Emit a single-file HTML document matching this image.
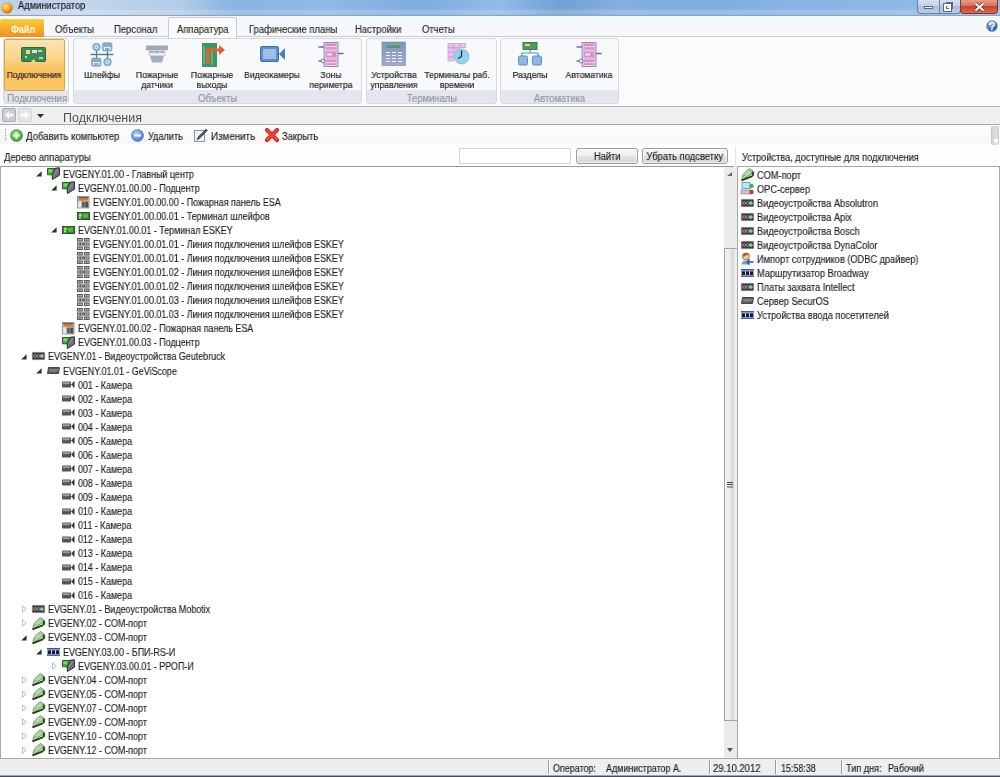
<!DOCTYPE html><html><head><meta charset="utf-8"><style>
*{margin:0;padding:0;box-sizing:border-box}
html,body{width:1000px;height:777px;overflow:hidden;background:#f0f0f0;font-family:"Liberation Sans",sans-serif;font-size:10px;color:#1e1e1e}
.a{position:absolute}
.t{position:absolute;white-space:nowrap;letter-spacing:0;line-height:12px;transform-origin:0 0;will-change:transform;-webkit-text-stroke:0.15px currentColor}
svg{position:absolute;overflow:visible}
#title{left:0;top:0;width:1000px;height:16px;background:linear-gradient(rgba(255,255,255,0) 0%,rgba(255,255,255,0) 55%,rgba(255,255,255,0.22) 78%,rgba(255,255,255,0.12) 100%),linear-gradient(90deg,#bccfe6 0px,#c3d6ec 80px,#b4cbe8 180px,#8ab4e2 230px,#8fb9e6 330px,#7eacdf 420px,#90bce8 500px,#729fd6 560px,#84b0e2 620px,#7eade2 700px,#86b3e4 780px,#8cb8e6 870px,#90bae6 1000px);border-bottom:1px solid #8da3bd}
#tabs{left:0;top:16px;width:1000px;height:21px;background:#f6f7f9;border-bottom:1px solid #c9ced6}
#ribbon{left:0;top:37px;width:1000px;height:70px;background:#fbfbfc;border-bottom:1px solid #b4b9c0}
.grp{position:absolute;top:38px;height:66px;border:1px solid #d6dae0;border-radius:3px;background:#f8f9fa}
.grp .lb{position:absolute;left:0;right:0;bottom:0;height:13px;background:#e3e7ed;color:#8f939a;text-align:center;font-size:10.5px;line-height:16.5px}.grp .lb span{display:inline-block;transform:scaleX(0.9);will-change:transform;-webkit-text-stroke:0.15px currentColor}
.ri{position:absolute;text-align:center;font-size:9.2px;line-height:10px;color:#262626;white-space:nowrap;transform:scaleX(0.94);-webkit-text-stroke:0.2px #262626;will-change:transform}
#nav{left:0;top:107px;width:1000px;height:18px;background:#efefef;border-bottom:1px solid #aaaaaa}
#tool{left:0;top:125px;width:1000px;height:19px;background:linear-gradient(#fdfdfd,#f6f6f8)}
#lbl{left:0;top:144px;width:1000px;height:22px;background:#fefefe}
#tree{left:0;top:166px;width:734px;height:593px;background:#fff;border-top:1px solid #9a9a9a;border-left:1px solid #a9a9a9}
#right{left:737px;top:166px;width:263px;height:593px;background:#fff;border:1px solid #a7a7a7}
#status{left:0;top:758px;width:1000px;height:18px;background:#efeeee;border-top:1px solid #a9a9a9}
#frame{left:0;top:775px;width:1000px;height:2px;background:linear-gradient(#9aa6b4 0,#9aa6b4 50%,#3f4d5f 50%)}
.btn{position:absolute;height:16px;border:1px solid #9c9c9c;border-radius:3px;background:linear-gradient(#f6f6f6 0%,#eeeeee 50%,#e2e2e2 51%,#d6d6d6 100%);text-align:center;line-height:15px;color:#1e1e1e;box-shadow:inset 0 0 0 1px rgba(255,255,255,0.6)}.btn span{will-change:transform;-webkit-text-stroke:0.15px currentColor}
.sep{position:absolute;top:760px;width:2px;height:14px;border-left:1px solid #9c9c9c;border-right:1px solid #fff}
</style></head><body>
<div class="a" id="title"></div>
<div class="a" id="tabs"></div>
<div class="a" id="ribbon"></div>
<div class="a" id="nav"></div>
<div class="a" id="tool"></div>
<div class="a" id="lbl"></div>
<div class="a" id="tree"></div>
<div class="a" id="right"></div>
<div class="a" id="status"></div>
<div class="a" id="frame"></div>
<svg style="left:1.0px;top:2.0px" width="12" height="12" viewBox="0 0 12 12"><defs><radialGradient id="orb" cx="40%" cy="35%" r="65%"><stop offset="0" stop-color="#ffe27a"/><stop offset="0.6" stop-color="#f5a21c"/><stop offset="1" stop-color="#c96a07"/></radialGradient></defs><circle cx="6" cy="6" r="5.6" fill="url(#orb)"/></svg>
<div class="t" style="left:17.5px;top:0.0px;transform:scaleX(0.917);font-size:10.2px;color:#1b1b1b">Администратор</div>
<div class="a" style="left:917px;top:-1px;width:44px;height:15px;border:1px solid #6f819a;border-top:none;border-radius:0 0 4px 4px;background:linear-gradient(#d8e4f2,#c0d2e8 50%,#a9bfdc 51%,#b9cde6)"></div>
<div class="a" style="left:939px;top:0px;width:1px;height:13px;background:#6f819a"></div>
<div class="a" style="left:960px;top:-1px;width:38px;height:15px;border:1px solid #7a3a30;border-top:none;border-radius:0 0 4px 4px;background:linear-gradient(#eaa58f,#d9705a 50%,#c8402a 51%,#d96a50)"></div>
<div class="a" style="left:924px;top:6px;width:9px;height:3px;background:#fff;border:1px solid #5a6a80"></div>
<div class="a" style="left:946px;top:2px;width:7px;height:7px;border:1px solid #5a6a80;background:#e8eef6"></div>
<div class="a" style="left:944px;top:4px;width:7px;height:7px;border:2px solid #fff;outline:1px solid #5a6a80"></div>
<svg style="left:974.0px;top:2.0px" width="11" height="10" viewBox="0 0 11 10"><path d="M1.5 1.5 L9.5 8.5 M9.5 1.5 L1.5 8.5" stroke="#6a2418" stroke-width="3.6"/><path d="M1.5 1.5 L9.5 8.5 M9.5 1.5 L1.5 8.5" stroke="#fff" stroke-width="2.2"/></svg>
<div class="a" style="left:0;top:19px;width:44px;height:18px;border-radius:2px 2px 0 0;background:linear-gradient(#f9cf3a,#f6b02a 45%,#f0901c 100%)"></div>
<div class="t" style="left:10.5px;top:23.0px;transform:scaleX(0.864);color:#fff6e0;font-size:10.5px;font-weight:bold">Файл</div>
<div class="a" style="left:168px;top:17px;width:69px;height:21px;background:#fbfbfc;border:1px solid #c6cbd2;border-bottom:none;border-radius:2px 2px 0 0"></div>
<div class="t" style="left:55.0px;top:23.8px;transform:scaleX(0.946);font-size:10px;color:#2a2a2a">Объекты</div>
<div class="t" style="left:114.0px;top:23.8px;transform:scaleX(0.946);font-size:10px;color:#2a2a2a">Персонал</div>
<div class="t" style="left:177.0px;top:23.8px;transform:scaleX(0.946);font-size:10px;color:#2a2a2a">Аппаратура</div>
<div class="t" style="left:249.0px;top:23.8px;transform:scaleX(0.946);font-size:10px;color:#2a2a2a">Графические планы</div>
<div class="t" style="left:355.0px;top:23.8px;transform:scaleX(0.946);font-size:10px;color:#2a2a2a">Настройки</div>
<div class="t" style="left:422.0px;top:23.8px;transform:scaleX(0.946);font-size:10px;color:#2a2a2a">Отчеты</div>
<svg style="left:986.0px;top:20.0px" width="12" height="12" viewBox="0 0 12 12"><defs><radialGradient id="hq" cx="40%" cy="30%" r="70%"><stop offset="0" stop-color="#9cc0f5"/><stop offset="0.7" stop-color="#3a6fd0"/><stop offset="1" stop-color="#2a4f9e"/></radialGradient></defs><circle cx="6" cy="6" r="5.5" fill="url(#hq)" stroke="#8aa7d6" stroke-width="0.6"/><path d="M4 4.6 Q4 2.6 6.2 2.6 Q8.3 2.6 8.3 4.4 Q8.3 5.6 6.6 6.3 L6 7.6" fill="none" stroke="#fff" stroke-width="1.5" stroke-linecap="round"/><circle cx="5.8" cy="9.4" r="0.9" fill="#fff"/></svg>
<div class="grp" style="left:3px;width:66px"><div class="lb"><span>Подключения</span></div></div>
<div class="grp" style="left:73px;width:289px"><div class="lb"><span>Объекты</span></div></div>
<div class="grp" style="left:366px;width:131px"><div class="lb"><span>Терминалы</span></div></div>
<div class="grp" style="left:500px;width:119px"><div class="lb"><span>Автоматика</span></div></div>
<div class="a" style="left:4px;top:39px;width:61px;height:52px;border:1px solid #d9a54c;border-radius:2px;background:linear-gradient(#fde4b2 0%,#fcd48c 35%,#f9c15a 62%,#f9c76a 100%)"></div>
<div class="ri" style="left:-6px;top:69.5px;width:80px">Подключения</div>
<div class="ri" style="left:62px;top:69.5px;width:80px">Шлейфы</div>
<div class="ri" style="left:117px;top:69.5px;width:80px">Пожарные<br>датчики</div>
<div class="ri" style="left:172px;top:69.5px;width:80px">Пожарные<br>выходы</div>
<div class="ri" style="left:232px;top:69.5px;width:80px">Видеокамеры</div>
<div class="ri" style="left:291px;top:69.5px;width:80px">Зоны<br>периметра</div>
<div class="ri" style="left:354px;top:69.5px;width:80px">Устройства<br>управления</div>
<div class="ri" style="left:417px;top:69.5px;width:80px">Терминалы раб.<br>времени</div>
<div class="ri" style="left:490px;top:69.5px;width:80px">Разделы</div>
<div class="ri" style="left:549px;top:69.5px;width:80px">Автоматика</div>
<svg style="left:21.0px;top:47.0px" width="25" height="16" viewBox="0 0 25 16"><rect x="0.5" y="0.5" width="24" height="14" rx="1" fill="#3f8a55" stroke="#2d6a40"/><rect x="5" y="3" width="4" height="4" fill="#e8d88a"/><rect x="11" y="3" width="5" height="3" fill="#d9e6d0"/><rect x="17" y="3" width="4" height="2" fill="#b8d6bf"/><rect x="4" y="9" width="2" height="2" fill="#b8d6bf"/><rect x="18" y="10" width="4" height="2" fill="#b8d6bf"/><path d="M10 15 L12.5 12 L15 15Z" fill="#f9cd72"/></svg>
<svg style="left:90.0px;top:42.0px" width="24" height="25" viewBox="0 0 24 25"><path d="M0.5 12.5 H23.5" stroke="#557890" stroke-width="1.4"/><path d="M6.5 8 V16 M17.5 8 V16" stroke="#557890" stroke-width="1.3"/><circle cx="6.5" cy="5" r="3.8" fill="#8db7dd" stroke="#6f9cc6" stroke-width="0.8"/><circle cx="6.5" cy="5" r="1.6" fill="none" stroke="#e9f1f9" stroke-width="0.9"/><rect x="12.5" y="0.8" width="9.5" height="8.2" rx="1.5" fill="#83acd5" stroke="#6f9cc6" stroke-width="0.6"/><path d="M14.5 8 V5.5 H20 V8" fill="none" stroke="#eef4fa" stroke-width="1.2"/><rect x="1.5" y="16" width="9.5" height="8.2" rx="1.5" fill="#83acd5" stroke="#6f9cc6" stroke-width="0.6"/><path d="M3.5 23 V20.5 H9 V23" fill="none" stroke="#eef4fa" stroke-width="1.2"/><circle cx="17.5" cy="20" r="3.8" fill="#8db7dd" stroke="#6f9cc6" stroke-width="0.8"/><circle cx="17.5" cy="20" r="1.6" fill="none" stroke="#e9f1f9" stroke-width="0.9"/></svg>
<svg style="left:145.0px;top:45.0px" width="24" height="19" viewBox="0 0 24 19"><rect x="1" y="0.5" width="22" height="4.8" fill="#9fa7bb"/><path d="M3.5 5.3 H20.5 V11 H3.5Z" fill="#cdd4e2"/><rect x="4.5" y="6" width="4" height="1.6" fill="#e39090"/><rect x="15.5" y="6" width="4" height="1.6" fill="#e39090"/><rect x="10" y="6" width="4" height="1.6" fill="#8fa0c8"/><rect x="5" y="8.6" width="14" height="1.4" fill="#f4f6fa"/><path d="M5 11 H19 L17 17.5 H7Z" fill="#a6aec2"/></svg>
<svg style="left:202.0px;top:42.0px" width="23" height="25" viewBox="0 0 23 25"><rect x="0" y="1" width="15" height="24" fill="#3f9560"/><path d="M2 4 V22 M5 8 V20 M10 6 V23" stroke="#8fd0a5" stroke-width="1"/><path d="M6 22 V8 H18" fill="none" stroke="#e8602e" stroke-width="3"/><path d="M17 3 L23 8 L17 13Z" fill="#e8602e"/></svg>
<svg style="left:260.0px;top:46.0px" width="25" height="16" viewBox="0 0 25 16"><rect x="0.5" y="0.5" width="18" height="15" rx="1.5" fill="#5d8fcf" stroke="#3f6fae"/><rect x="3" y="3" width="13" height="10" fill="#9cc0ea"/><path d="M19 8 L25 2 V14Z" fill="#4b7fc0"/></svg>
<svg style="left:319.0px;top:42.0px" width="24" height="25" viewBox="0 0 24 25"><rect x="5" y="0.5" width="14" height="24" fill="#efd2ea" stroke="#9c86c8"/><path d="M5 8 H19 M5 16 H19" stroke="#b49ad0" stroke-width="0.8"/><g fill="#d990c4"><rect x="6.5" y="1.5" width="11" height="5.5"/><rect x="6.5" y="9.5" width="11" height="5.5"/><rect x="6.5" y="17.5" width="11" height="5.5"/></g><g fill="#f6e6f2"><rect x="7.5" y="4" width="2.5" height="1.2"/><rect x="11" y="4" width="2.5" height="1.2"/><rect x="14.5" y="4" width="2.5" height="1.2"/><rect x="8" y="11.5" width="5" height="2"/><rect x="7.5" y="20" width="2.5" height="1.2"/><rect x="11" y="20" width="2.5" height="1.2"/><rect x="14.5" y="20" width="2.5" height="1.2"/></g><path d="M19 11.5 H24.5 M-0.5 19 H5 M-0.5 5 H5" stroke="#4a78c0" stroke-width="1.3"/><circle cx="4" cy="19" r="1.8" fill="#fff" stroke="#4a78c0" stroke-width="0.9"/></svg>
<svg style="left:382.0px;top:42.0px" width="24" height="24" viewBox="0 0 24 24"><defs><linearGradient id="dg" x1="0" y1="0" x2="0" y2="1"><stop offset="0" stop-color="#8494bd"/><stop offset="1" stop-color="#a0acd0"/></linearGradient></defs><rect x="0" y="0" width="23.5" height="23.5" fill="url(#dg)" stroke="#7483ad" stroke-width="0.6"/><rect x="5" y="3.5" width="13.5" height="2.5" fill="#45a45a"/><g fill="#eef1f8"><rect x="4" y="10" width="4" height="1"/><rect x="10" y="10" width="4" height="1"/><rect x="16" y="10" width="4" height="1"/><rect x="4" y="13" width="4" height="1"/><rect x="10" y="13" width="4" height="1"/><rect x="16" y="13" width="4" height="1"/><rect x="4" y="16" width="4" height="1"/><rect x="10" y="16" width="4" height="1"/><rect x="16" y="16" width="4" height="1"/><rect x="4" y="19" width="4" height="1"/><rect x="10" y="19" width="4" height="1"/><rect x="16" y="19" width="4" height="1"/></g></svg>
<svg style="left:445.0px;top:42.0px" width="26" height="26" viewBox="0 0 26 26"><g fill="#e4c4e8" stroke="#c89ad0" stroke-width="0.7"><rect x="3" y="1.5" width="5.5" height="4"/><rect x="9" y="1.5" width="5.5" height="4"/><rect x="15" y="1.5" width="5.5" height="4"/><rect x="3" y="6" width="5.5" height="4"/><rect x="9" y="6" width="5.5" height="4"/><rect x="3" y="10.5" width="5.5" height="4"/><rect x="3" y="15" width="5.5" height="4"/></g><circle cx="16.5" cy="14.5" r="7.5" fill="#93d2ef" stroke="#6cbde6" stroke-width="0.8"/><path d="M16.5 14.5 V8.5 M16.5 14.5 L13 16.5" fill="none" stroke="#222a40" stroke-width="1.3"/></svg>
<svg style="left:518.0px;top:42.0px" width="24" height="24" viewBox="0 0 24 24"><rect x="5" y="0.5" width="14" height="7" fill="#4f9a5e" stroke="#3a7d49"/><rect x="7" y="2" width="5" height="2" fill="#e8d88a"/><path d="M12 8 V11 M4 11 H20 M4 11 V14 M20 11 V14" stroke="#5b8fc6" stroke-width="1.2" fill="none"/><rect x="0.5" y="14" width="9" height="9" rx="1.5" fill="#8fb7df" stroke="#5b8fc6"/><rect x="14.5" y="14" width="9" height="9" rx="1.5" fill="#8fb7df" stroke="#5b8fc6"/></svg>
<svg style="left:577.0px;top:42.0px" width="24" height="25" viewBox="0 0 24 25"><rect x="5" y="0.5" width="14" height="24" fill="#efd2ea" stroke="#9c86c8"/><path d="M5 8 H19 M5 16 H19" stroke="#b49ad0" stroke-width="0.8"/><g fill="#d990c4"><rect x="6.5" y="1.5" width="11" height="5.5"/><rect x="6.5" y="9.5" width="11" height="5.5"/><rect x="6.5" y="17.5" width="11" height="5.5"/></g><g fill="#f6e6f2"><rect x="7.5" y="4" width="2.5" height="1.2"/><rect x="11" y="4" width="2.5" height="1.2"/><rect x="14.5" y="4" width="2.5" height="1.2"/><rect x="8" y="11.5" width="5" height="2"/><rect x="7.5" y="20" width="2.5" height="1.2"/><rect x="11" y="20" width="2.5" height="1.2"/><rect x="14.5" y="20" width="2.5" height="1.2"/></g><path d="M19 11.5 H24.5 M-0.5 19 H5 M-0.5 5 H5" stroke="#4a78c0" stroke-width="1.3"/><circle cx="4" cy="19" r="1.8" fill="#fff" stroke="#4a78c0" stroke-width="0.9"/></svg>
<svg style="left:2.0px;top:108.0px" width="14" height="14" viewBox="0 0 14 14"><rect x="0.5" y="0.5" width="13" height="13" rx="1.5" fill="#c9ccd0" stroke="#a9adb3"/><path d="M2.5 7 L7 3 V5.5 H11.5 V8.5 H7 V11Z" fill="#f4f5f6"/></svg>
<svg style="left:18.0px;top:108.0px" width="14" height="14" viewBox="0 0 14 14"><rect x="0.5" y="0.5" width="13" height="13" rx="1.5" fill="#e3e5e7" stroke="#d3d6d9"/><path d="M11.5 7 L7 3 V5.5 H2.5 V8.5 H7 V11Z" fill="#fbfbfb"/></svg>
<svg style="left:37.0px;top:114.0px" width="7" height="4" viewBox="0 0 7 4"><path d="M0 0 H7 L3.5 4Z" fill="#333"/></svg>
<div class="t" style="left:62.5px;top:110.5px;transform:scaleX(1.040);font-size:12px;color:#505050;line-height:14px;-webkit-text-stroke:0">Подключения</div>
<div class="a" style="left:5px;top:129px;width:1px;height:11px;border-left:1px dotted #9a9a9a"></div>
<svg style="left:10.0px;top:129.0px" width="13" height="13" viewBox="0 0 13 13"><defs><radialGradient id="gp" cx="40%" cy="35%" r="70%"><stop offset="0" stop-color="#9be07a"/><stop offset="1" stop-color="#2f9a2a"/></radialGradient></defs><circle cx="6.5" cy="6.5" r="6" fill="url(#gp)" stroke="#3b8a35" stroke-width="0.6"/><path d="M6.5 3 V10 M3 6.5 H10" stroke="#fff" stroke-width="2"/></svg>
<div class="t" style="left:26.0px;top:130.7px;transform:scaleX(0.960);">Добавить компьютер</div>
<svg style="left:131.0px;top:129.0px" width="13" height="13" viewBox="0 0 13 13"><defs><radialGradient id="bm" cx="40%" cy="35%" r="70%"><stop offset="0" stop-color="#b9d3f7"/><stop offset="1" stop-color="#3a72c8"/></radialGradient></defs><circle cx="6.5" cy="6.5" r="6" fill="url(#bm)" stroke="#3f6fb5" stroke-width="0.6"/><path d="M3 6.5 H10" stroke="#fff" stroke-width="2"/></svg>
<div class="t" style="left:148.0px;top:130.7px;transform:scaleX(0.912);">Удалить</div>
<svg style="left:194.0px;top:128.0px" width="14" height="14" viewBox="0 0 14 14"><rect x="0.5" y="2.5" width="10" height="11" fill="#eef3f9" stroke="#7d98b8"/><path d="M3 12 L4 9 L12 1 L13.5 2.5 L5.5 10.5Z" fill="#555" stroke="#333" stroke-width="0.5"/></svg>
<div class="t" style="left:211.0px;top:130.7px;transform:scaleX(0.979);">Изменить</div>
<svg style="left:265.0px;top:128.0px" width="14" height="14" viewBox="0 0 14 14"><path d="M2 2 L12 12 M12 2 L2 12" stroke="#b3231a" stroke-width="4.2" stroke-linecap="round"/><path d="M2 2 L12 12 M12 2 L2 12" stroke="#e8463a" stroke-width="2.6" stroke-linecap="round"/></svg>
<div class="t" style="left:282.0px;top:130.7px;transform:scaleX(0.941);">Закрыть</div>
<div class="a" style="left:991px;top:126px;width:8px;height:19px;border-radius:2px;background:linear-gradient(90deg,#bdbdbd 0,#d6d6d6 20%,#dedede 70%,#cfcfcf 100%)"></div>
<div class="a" style="left:994px;top:139px;width:4px;height:1.5px;background:#fafafa"></div>
<svg style="left:994.0px;top:141.0px" width="4" height="3" viewBox="0 0 4 3"><path d="M0 0 H4 L2 3Z" fill="#fafafa"/></svg>
<div class="a" style="left:735px;top:146px;width:1px;height:20px;background:#e4e4e4"></div>
<div class="t" style="left:4.0px;top:151.8px;transform:scaleX(0.941);">Дерево аппаратуры</div>
<div class="a" style="left:459px;top:148px;width:112px;height:16px;border:1px solid #d5d5d5;background:#fff"></div>
<div class="btn" style="left:576px;top:148px;width:62px"><span style="display:inline-block;transform:scaleX(0.93)">Найти</span></div>
<div class="btn" style="left:642px;top:148px;width:86px"><span style="display:inline-block;transform:scaleX(0.94)">Убрать подсветку</span></div>
<div class="t" style="left:741.5px;top:151.8px;transform:scaleX(0.922);">Устройства, доступные для подключения</div>
<div class="a" style="left:724px;top:167px;width:13px;height:591px;background:#ebebeb"></div>
<svg style="left:727.0px;top:172.0px" width="5" height="4" viewBox="0 0 5 4"><path d="M0 4 L5 4 L5 0Z" fill="#6a6a6a"/></svg>
<div class="a" style="left:724px;top:248px;width:13px;height:473px;border:1px solid #a3a3a3;border-right:none;background:linear-gradient(90deg,#f2f2f2 0%,#ececec 40%,#d6d6d6 65%,#eeeeee 85%,#f2f2f2 100%)"></div>
<div class="a" style="left:727px;top:482px;width:6px;height:1px;background:#444;box-shadow:0 2px 0 #444,0 4.5px 0 #555"></div>
<svg style="left:727.0px;top:748.0px" width="6" height="4" viewBox="0 0 6 4"><path d="M0 0 H6 L3 4Z" fill="#555"/></svg>
<svg style="left:36.0px;top:171.2px" width="6" height="6" viewBox="0 0 6 6"><path d="M0.2 5.6 H5.6 V0.2Z" fill="#2e2e2e"/></svg>
<svg style="left:47.0px;top:167.2px" width="13" height="13" viewBox="0 0 13 13"><path d="M0.5 1.5 H9 L5 7.8 H0.5Z" fill="#3dba2f" stroke="#1d5518" stroke-width="0.9"/><rect x="1.5" y="2.5" width="3.5" height="2.5" fill="#7fd86c"/><path d="M8.3 1.2 L12.4 0.8 V8.2 L5.4 12.5 L5.2 7.6Z" fill="#75727c" stroke="#2b2a30" stroke-width="1"/><path d="M6.8 7.6 L10.8 2.6" stroke="#a9a6b0" stroke-width="0.8"/></svg>
<div class="t" style="left:62.5px;top:168.8px;transform:scaleX(0.893);">EVGENY.01.00 - Главный центр</div>
<svg style="left:51.0px;top:185.3px" width="6" height="6" viewBox="0 0 6 6"><path d="M0.2 5.6 H5.6 V0.2Z" fill="#2e2e2e"/></svg>
<svg style="left:62.0px;top:181.3px" width="13" height="13" viewBox="0 0 13 13"><path d="M0.5 1.5 H9 L5 7.8 H0.5Z" fill="#3dba2f" stroke="#1d5518" stroke-width="0.9"/><rect x="1.5" y="2.5" width="3.5" height="2.5" fill="#7fd86c"/><path d="M8.3 1.2 L12.4 0.8 V8.2 L5.4 12.5 L5.2 7.6Z" fill="#75727c" stroke="#2b2a30" stroke-width="1"/><path d="M6.8 7.6 L10.8 2.6" stroke="#a9a6b0" stroke-width="0.8"/></svg>
<div class="t" style="left:77.5px;top:182.8px;transform:scaleX(0.893);">EVGENY.01.00.00 - Подцентр</div>
<svg style="left:77.0px;top:195.8px" width="12" height="12" viewBox="0 0 12 12"><rect x="0.4" y="0.4" width="11.6" height="11.6" fill="#cfcac6" stroke="#8a8580" stroke-width="0.8"/><rect x="1.5" y="1.5" width="9.5" height="3.2" fill="#d27a34"/><rect x="1.2" y="1.2" width="10" height="0.8" fill="#5a4a40"/><rect x="4.8" y="5.6" width="3" height="5.8" fill="#5a5e66"/><rect x="8.2" y="5.6" width="3" height="5.8" fill="#4a4e56"/><rect x="1" y="5.5" width="3.2" height="6" fill="#e6e2de"/></svg>
<div class="t" style="left:92.5px;top:196.8px;transform:scaleX(0.893);">EVGENY.01.00.00.00 - Пожарная панель ESA</div>
<svg style="left:77.0px;top:211.9px" width="13" height="8" viewBox="0 0 13 8"><rect x="0.4" y="0.4" width="12.2" height="7.2" fill="#2f7f2a" stroke="#174a14" stroke-width="0.8"/><rect x="1.8" y="1.6" width="3" height="3" fill="#9be07e"/><rect x="6" y="1.6" width="5" height="4.2" fill="#58b04e"/><rect x="2" y="5" width="2" height="1.5" fill="#bfe8a8"/></svg>
<div class="t" style="left:92.5px;top:210.9px;transform:scaleX(0.893);">EVGENY.01.00.00.01 - Терминал шлейфов</div>
<svg style="left:51.0px;top:227.4px" width="6" height="6" viewBox="0 0 6 6"><path d="M0.2 5.6 H5.6 V0.2Z" fill="#2e2e2e"/></svg>
<svg style="left:62.0px;top:225.9px" width="13" height="8" viewBox="0 0 13 8"><rect x="0.4" y="0.4" width="12.2" height="7.2" fill="#2f7f2a" stroke="#174a14" stroke-width="0.8"/><rect x="1.8" y="1.6" width="3" height="3" fill="#9be07e"/><rect x="6" y="1.6" width="5" height="4.2" fill="#58b04e"/><rect x="2" y="5" width="2" height="1.5" fill="#bfe8a8"/></svg>
<div class="t" style="left:77.5px;top:224.9px;transform:scaleX(0.893);">EVGENY.01.00.01 - Терминал ESKEY</div>
<svg style="left:77.0px;top:238.0px" width="13" height="12" viewBox="0 0 13 12"><g fill="#5a5a5a"><rect x="0" y="0" width="5.8" height="3.6"/><rect x="6.8" y="0" width="5.8" height="3.6"/><rect x="0" y="4.4" width="12.6" height="3.2"/><rect x="0" y="8.4" width="5.8" height="3.6"/><rect x="6.8" y="8.4" width="5.8" height="3.6"/></g><g fill="#dcdcdc"><rect x="1" y="1.2" width="1.5" height="1.2"/><rect x="3.3" y="1.2" width="1.5" height="1.2"/><rect x="7.8" y="1.2" width="1.5" height="1.2"/><rect x="10.1" y="1.2" width="1.5" height="1.2"/><rect x="1" y="5.4" width="1.5" height="1.2"/><rect x="4" y="5.4" width="1.5" height="1.2"/><rect x="7.8" y="5.4" width="1.5" height="1.2"/><rect x="10.1" y="5.4" width="1.5" height="1.2"/><rect x="1" y="9.6" width="1.5" height="1.2"/><rect x="3.3" y="9.6" width="1.5" height="1.2"/><rect x="7.8" y="9.6" width="1.5" height="1.2"/><rect x="10.1" y="9.6" width="1.5" height="1.2"/></g></svg>
<div class="t" style="left:92.5px;top:239.0px;transform:scaleX(0.893);">EVGENY.01.00.01.01 - Линия подключения шлейфов ESKEY</div>
<svg style="left:77.0px;top:252.1px" width="13" height="12" viewBox="0 0 13 12"><g fill="#5a5a5a"><rect x="0" y="0" width="5.8" height="3.6"/><rect x="6.8" y="0" width="5.8" height="3.6"/><rect x="0" y="4.4" width="12.6" height="3.2"/><rect x="0" y="8.4" width="5.8" height="3.6"/><rect x="6.8" y="8.4" width="5.8" height="3.6"/></g><g fill="#dcdcdc"><rect x="1" y="1.2" width="1.5" height="1.2"/><rect x="3.3" y="1.2" width="1.5" height="1.2"/><rect x="7.8" y="1.2" width="1.5" height="1.2"/><rect x="10.1" y="1.2" width="1.5" height="1.2"/><rect x="1" y="5.4" width="1.5" height="1.2"/><rect x="4" y="5.4" width="1.5" height="1.2"/><rect x="7.8" y="5.4" width="1.5" height="1.2"/><rect x="10.1" y="5.4" width="1.5" height="1.2"/><rect x="1" y="9.6" width="1.5" height="1.2"/><rect x="3.3" y="9.6" width="1.5" height="1.2"/><rect x="7.8" y="9.6" width="1.5" height="1.2"/><rect x="10.1" y="9.6" width="1.5" height="1.2"/></g></svg>
<div class="t" style="left:92.5px;top:253.1px;transform:scaleX(0.893);">EVGENY.01.00.01.01 - Линия подключения шлейфов ESKEY</div>
<svg style="left:77.0px;top:266.1px" width="13" height="12" viewBox="0 0 13 12"><g fill="#5a5a5a"><rect x="0" y="0" width="5.8" height="3.6"/><rect x="6.8" y="0" width="5.8" height="3.6"/><rect x="0" y="4.4" width="12.6" height="3.2"/><rect x="0" y="8.4" width="5.8" height="3.6"/><rect x="6.8" y="8.4" width="5.8" height="3.6"/></g><g fill="#dcdcdc"><rect x="1" y="1.2" width="1.5" height="1.2"/><rect x="3.3" y="1.2" width="1.5" height="1.2"/><rect x="7.8" y="1.2" width="1.5" height="1.2"/><rect x="10.1" y="1.2" width="1.5" height="1.2"/><rect x="1" y="5.4" width="1.5" height="1.2"/><rect x="4" y="5.4" width="1.5" height="1.2"/><rect x="7.8" y="5.4" width="1.5" height="1.2"/><rect x="10.1" y="5.4" width="1.5" height="1.2"/><rect x="1" y="9.6" width="1.5" height="1.2"/><rect x="3.3" y="9.6" width="1.5" height="1.2"/><rect x="7.8" y="9.6" width="1.5" height="1.2"/><rect x="10.1" y="9.6" width="1.5" height="1.2"/></g></svg>
<div class="t" style="left:92.5px;top:267.1px;transform:scaleX(0.893);">EVGENY.01.00.01.02 - Линия подключения шлейфов ESKEY</div>
<svg style="left:77.0px;top:280.1px" width="13" height="12" viewBox="0 0 13 12"><g fill="#5a5a5a"><rect x="0" y="0" width="5.8" height="3.6"/><rect x="6.8" y="0" width="5.8" height="3.6"/><rect x="0" y="4.4" width="12.6" height="3.2"/><rect x="0" y="8.4" width="5.8" height="3.6"/><rect x="6.8" y="8.4" width="5.8" height="3.6"/></g><g fill="#dcdcdc"><rect x="1" y="1.2" width="1.5" height="1.2"/><rect x="3.3" y="1.2" width="1.5" height="1.2"/><rect x="7.8" y="1.2" width="1.5" height="1.2"/><rect x="10.1" y="1.2" width="1.5" height="1.2"/><rect x="1" y="5.4" width="1.5" height="1.2"/><rect x="4" y="5.4" width="1.5" height="1.2"/><rect x="7.8" y="5.4" width="1.5" height="1.2"/><rect x="10.1" y="5.4" width="1.5" height="1.2"/><rect x="1" y="9.6" width="1.5" height="1.2"/><rect x="3.3" y="9.6" width="1.5" height="1.2"/><rect x="7.8" y="9.6" width="1.5" height="1.2"/><rect x="10.1" y="9.6" width="1.5" height="1.2"/></g></svg>
<div class="t" style="left:92.5px;top:281.1px;transform:scaleX(0.893);">EVGENY.01.00.01.02 - Линия подключения шлейфов ESKEY</div>
<svg style="left:77.0px;top:294.2px" width="13" height="12" viewBox="0 0 13 12"><g fill="#5a5a5a"><rect x="0" y="0" width="5.8" height="3.6"/><rect x="6.8" y="0" width="5.8" height="3.6"/><rect x="0" y="4.4" width="12.6" height="3.2"/><rect x="0" y="8.4" width="5.8" height="3.6"/><rect x="6.8" y="8.4" width="5.8" height="3.6"/></g><g fill="#dcdcdc"><rect x="1" y="1.2" width="1.5" height="1.2"/><rect x="3.3" y="1.2" width="1.5" height="1.2"/><rect x="7.8" y="1.2" width="1.5" height="1.2"/><rect x="10.1" y="1.2" width="1.5" height="1.2"/><rect x="1" y="5.4" width="1.5" height="1.2"/><rect x="4" y="5.4" width="1.5" height="1.2"/><rect x="7.8" y="5.4" width="1.5" height="1.2"/><rect x="10.1" y="5.4" width="1.5" height="1.2"/><rect x="1" y="9.6" width="1.5" height="1.2"/><rect x="3.3" y="9.6" width="1.5" height="1.2"/><rect x="7.8" y="9.6" width="1.5" height="1.2"/><rect x="10.1" y="9.6" width="1.5" height="1.2"/></g></svg>
<div class="t" style="left:92.5px;top:295.2px;transform:scaleX(0.893);">EVGENY.01.00.01.03 - Линия подключения шлейфов ESKEY</div>
<svg style="left:77.0px;top:308.2px" width="13" height="12" viewBox="0 0 13 12"><g fill="#5a5a5a"><rect x="0" y="0" width="5.8" height="3.6"/><rect x="6.8" y="0" width="5.8" height="3.6"/><rect x="0" y="4.4" width="12.6" height="3.2"/><rect x="0" y="8.4" width="5.8" height="3.6"/><rect x="6.8" y="8.4" width="5.8" height="3.6"/></g><g fill="#dcdcdc"><rect x="1" y="1.2" width="1.5" height="1.2"/><rect x="3.3" y="1.2" width="1.5" height="1.2"/><rect x="7.8" y="1.2" width="1.5" height="1.2"/><rect x="10.1" y="1.2" width="1.5" height="1.2"/><rect x="1" y="5.4" width="1.5" height="1.2"/><rect x="4" y="5.4" width="1.5" height="1.2"/><rect x="7.8" y="5.4" width="1.5" height="1.2"/><rect x="10.1" y="5.4" width="1.5" height="1.2"/><rect x="1" y="9.6" width="1.5" height="1.2"/><rect x="3.3" y="9.6" width="1.5" height="1.2"/><rect x="7.8" y="9.6" width="1.5" height="1.2"/><rect x="10.1" y="9.6" width="1.5" height="1.2"/></g></svg>
<div class="t" style="left:92.5px;top:309.2px;transform:scaleX(0.893);">EVGENY.01.00.01.03 - Линия подключения шлейфов ESKEY</div>
<svg style="left:62.0px;top:322.3px" width="12" height="12" viewBox="0 0 12 12"><rect x="0.4" y="0.4" width="11.6" height="11.6" fill="#cfcac6" stroke="#8a8580" stroke-width="0.8"/><rect x="1.5" y="1.5" width="9.5" height="3.2" fill="#d27a34"/><rect x="1.2" y="1.2" width="10" height="0.8" fill="#5a4a40"/><rect x="4.8" y="5.6" width="3" height="5.8" fill="#5a5e66"/><rect x="8.2" y="5.6" width="3" height="5.8" fill="#4a4e56"/><rect x="1" y="5.5" width="3.2" height="6" fill="#e6e2de"/></svg>
<div class="t" style="left:77.5px;top:323.3px;transform:scaleX(0.893);">EVGENY.01.00.02 - Пожарная панель ESA</div>
<svg style="left:62.0px;top:335.9px" width="13" height="13" viewBox="0 0 13 13"><path d="M0.5 1.5 H9 L5 7.8 H0.5Z" fill="#3dba2f" stroke="#1d5518" stroke-width="0.9"/><rect x="1.5" y="2.5" width="3.5" height="2.5" fill="#7fd86c"/><path d="M8.3 1.2 L12.4 0.8 V8.2 L5.4 12.5 L5.2 7.6Z" fill="#75727c" stroke="#2b2a30" stroke-width="1"/><path d="M6.8 7.6 L10.8 2.6" stroke="#a9a6b0" stroke-width="0.8"/></svg>
<div class="t" style="left:77.5px;top:337.4px;transform:scaleX(0.893);">EVGENY.01.00.03 - Подцентр</div>
<svg style="left:21.0px;top:353.9px" width="6" height="6" viewBox="0 0 6 6"><path d="M0.2 5.6 H5.6 V0.2Z" fill="#2e2e2e"/></svg>
<svg style="left:32.0px;top:352.4px" width="13" height="8" viewBox="0 0 13 8"><rect x="0.4" y="0.4" width="12.2" height="7.2" rx="0.6" fill="#3a3a3c" stroke="#7a7a80" stroke-width="0.8"/><circle cx="3.2" cy="4" r="1.4" fill="none" stroke="#d08a96" stroke-width="0.9"/><circle cx="6.5" cy="4" r="1.4" fill="none" stroke="#8a8ed0" stroke-width="0.9"/><circle cx="9.8" cy="4" r="1.5" fill="#7ccc7c" stroke="#a8e0a8" stroke-width="0.6"/></svg>
<div class="t" style="left:47.5px;top:351.4px;transform:scaleX(0.893);">EVGENY.01 - Видеоустройства Geutebruck</div>
<svg style="left:36.0px;top:368.0px" width="6" height="6" viewBox="0 0 6 6"><path d="M0.2 5.6 H5.6 V0.2Z" fill="#2e2e2e"/></svg>
<svg style="left:47.0px;top:367.0px" width="13" height="7" viewBox="0 0 13 7"><path d="M1.5 0.5 H12.5 L11.5 6.5 H0.5Z" fill="#5a5a5a" stroke="#2e2e2e" stroke-width="0.8"/><path d="M2 3 H11.5" stroke="#a8a8a8" stroke-width="1"/><rect x="2" y="4.2" width="7" height="1" fill="#4f8a6a"/></svg>
<div class="t" style="left:62.5px;top:365.5px;transform:scaleX(0.893);">EVGENY.01.01 - GeViScope</div>
<svg style="left:62.0px;top:381.0px" width="13" height="7" viewBox="0 0 13 7"><rect x="0" y="0.5" width="9" height="6" rx="0.8" fill="#555"/><rect x="0.8" y="1.2" width="7" height="2" fill="#9a9a9a"/><path d="M9 3.5 L12 0.5 V6.5Z" fill="#444"/><rect x="11.5" y="0.5" width="1" height="6" fill="#333"/></svg>
<div class="t" style="left:77.5px;top:379.5px;transform:scaleX(0.893);">001 - Камера</div>
<svg style="left:62.0px;top:395.1px" width="13" height="7" viewBox="0 0 13 7"><rect x="0" y="0.5" width="9" height="6" rx="0.8" fill="#555"/><rect x="0.8" y="1.2" width="7" height="2" fill="#9a9a9a"/><path d="M9 3.5 L12 0.5 V6.5Z" fill="#444"/><rect x="11.5" y="0.5" width="1" height="6" fill="#333"/></svg>
<div class="t" style="left:77.5px;top:393.6px;transform:scaleX(0.893);">002 - Камера</div>
<svg style="left:62.0px;top:409.1px" width="13" height="7" viewBox="0 0 13 7"><rect x="0" y="0.5" width="9" height="6" rx="0.8" fill="#555"/><rect x="0.8" y="1.2" width="7" height="2" fill="#9a9a9a"/><path d="M9 3.5 L12 0.5 V6.5Z" fill="#444"/><rect x="11.5" y="0.5" width="1" height="6" fill="#333"/></svg>
<div class="t" style="left:77.5px;top:407.6px;transform:scaleX(0.893);">003 - Камера</div>
<svg style="left:62.0px;top:423.1px" width="13" height="7" viewBox="0 0 13 7"><rect x="0" y="0.5" width="9" height="6" rx="0.8" fill="#555"/><rect x="0.8" y="1.2" width="7" height="2" fill="#9a9a9a"/><path d="M9 3.5 L12 0.5 V6.5Z" fill="#444"/><rect x="11.5" y="0.5" width="1" height="6" fill="#333"/></svg>
<div class="t" style="left:77.5px;top:421.6px;transform:scaleX(0.893);">004 - Камера</div>
<svg style="left:62.0px;top:437.2px" width="13" height="7" viewBox="0 0 13 7"><rect x="0" y="0.5" width="9" height="6" rx="0.8" fill="#555"/><rect x="0.8" y="1.2" width="7" height="2" fill="#9a9a9a"/><path d="M9 3.5 L12 0.5 V6.5Z" fill="#444"/><rect x="11.5" y="0.5" width="1" height="6" fill="#333"/></svg>
<div class="t" style="left:77.5px;top:435.7px;transform:scaleX(0.893);">005 - Камера</div>
<svg style="left:62.0px;top:451.2px" width="13" height="7" viewBox="0 0 13 7"><rect x="0" y="0.5" width="9" height="6" rx="0.8" fill="#555"/><rect x="0.8" y="1.2" width="7" height="2" fill="#9a9a9a"/><path d="M9 3.5 L12 0.5 V6.5Z" fill="#444"/><rect x="11.5" y="0.5" width="1" height="6" fill="#333"/></svg>
<div class="t" style="left:77.5px;top:449.8px;transform:scaleX(0.893);">006 - Камера</div>
<svg style="left:62.0px;top:465.3px" width="13" height="7" viewBox="0 0 13 7"><rect x="0" y="0.5" width="9" height="6" rx="0.8" fill="#555"/><rect x="0.8" y="1.2" width="7" height="2" fill="#9a9a9a"/><path d="M9 3.5 L12 0.5 V6.5Z" fill="#444"/><rect x="11.5" y="0.5" width="1" height="6" fill="#333"/></svg>
<div class="t" style="left:77.5px;top:463.8px;transform:scaleX(0.893);">007 - Камера</div>
<svg style="left:62.0px;top:479.4px" width="13" height="7" viewBox="0 0 13 7"><rect x="0" y="0.5" width="9" height="6" rx="0.8" fill="#555"/><rect x="0.8" y="1.2" width="7" height="2" fill="#9a9a9a"/><path d="M9 3.5 L12 0.5 V6.5Z" fill="#444"/><rect x="11.5" y="0.5" width="1" height="6" fill="#333"/></svg>
<div class="t" style="left:77.5px;top:477.9px;transform:scaleX(0.893);">008 - Камера</div>
<svg style="left:62.0px;top:493.4px" width="13" height="7" viewBox="0 0 13 7"><rect x="0" y="0.5" width="9" height="6" rx="0.8" fill="#555"/><rect x="0.8" y="1.2" width="7" height="2" fill="#9a9a9a"/><path d="M9 3.5 L12 0.5 V6.5Z" fill="#444"/><rect x="11.5" y="0.5" width="1" height="6" fill="#333"/></svg>
<div class="t" style="left:77.5px;top:491.9px;transform:scaleX(0.893);">009 - Камера</div>
<svg style="left:62.0px;top:507.5px" width="13" height="7" viewBox="0 0 13 7"><rect x="0" y="0.5" width="9" height="6" rx="0.8" fill="#555"/><rect x="0.8" y="1.2" width="7" height="2" fill="#9a9a9a"/><path d="M9 3.5 L12 0.5 V6.5Z" fill="#444"/><rect x="11.5" y="0.5" width="1" height="6" fill="#333"/></svg>
<div class="t" style="left:77.5px;top:506.0px;transform:scaleX(0.893);">010 - Камера</div>
<svg style="left:62.0px;top:521.5px" width="13" height="7" viewBox="0 0 13 7"><rect x="0" y="0.5" width="9" height="6" rx="0.8" fill="#555"/><rect x="0.8" y="1.2" width="7" height="2" fill="#9a9a9a"/><path d="M9 3.5 L12 0.5 V6.5Z" fill="#444"/><rect x="11.5" y="0.5" width="1" height="6" fill="#333"/></svg>
<div class="t" style="left:77.5px;top:520.0px;transform:scaleX(0.893);">011 - Камера</div>
<svg style="left:62.0px;top:535.5px" width="13" height="7" viewBox="0 0 13 7"><rect x="0" y="0.5" width="9" height="6" rx="0.8" fill="#555"/><rect x="0.8" y="1.2" width="7" height="2" fill="#9a9a9a"/><path d="M9 3.5 L12 0.5 V6.5Z" fill="#444"/><rect x="11.5" y="0.5" width="1" height="6" fill="#333"/></svg>
<div class="t" style="left:77.5px;top:534.0px;transform:scaleX(0.893);">012 - Камера</div>
<svg style="left:62.0px;top:549.6px" width="13" height="7" viewBox="0 0 13 7"><rect x="0" y="0.5" width="9" height="6" rx="0.8" fill="#555"/><rect x="0.8" y="1.2" width="7" height="2" fill="#9a9a9a"/><path d="M9 3.5 L12 0.5 V6.5Z" fill="#444"/><rect x="11.5" y="0.5" width="1" height="6" fill="#333"/></svg>
<div class="t" style="left:77.5px;top:548.1px;transform:scaleX(0.893);">013 - Камера</div>
<svg style="left:62.0px;top:563.7px" width="13" height="7" viewBox="0 0 13 7"><rect x="0" y="0.5" width="9" height="6" rx="0.8" fill="#555"/><rect x="0.8" y="1.2" width="7" height="2" fill="#9a9a9a"/><path d="M9 3.5 L12 0.5 V6.5Z" fill="#444"/><rect x="11.5" y="0.5" width="1" height="6" fill="#333"/></svg>
<div class="t" style="left:77.5px;top:562.2px;transform:scaleX(0.893);">014 - Камера</div>
<svg style="left:62.0px;top:577.7px" width="13" height="7" viewBox="0 0 13 7"><rect x="0" y="0.5" width="9" height="6" rx="0.8" fill="#555"/><rect x="0.8" y="1.2" width="7" height="2" fill="#9a9a9a"/><path d="M9 3.5 L12 0.5 V6.5Z" fill="#444"/><rect x="11.5" y="0.5" width="1" height="6" fill="#333"/></svg>
<div class="t" style="left:77.5px;top:576.2px;transform:scaleX(0.893);">015 - Камера</div>
<svg style="left:62.0px;top:591.8px" width="13" height="7" viewBox="0 0 13 7"><rect x="0" y="0.5" width="9" height="6" rx="0.8" fill="#555"/><rect x="0.8" y="1.2" width="7" height="2" fill="#9a9a9a"/><path d="M9 3.5 L12 0.5 V6.5Z" fill="#444"/><rect x="11.5" y="0.5" width="1" height="6" fill="#333"/></svg>
<div class="t" style="left:77.5px;top:590.2px;transform:scaleX(0.893);">016 - Камера</div>
<svg style="left:22.0px;top:605.3px" width="5" height="8" viewBox="0 0 5 8"><path d="M0.6 0.8 L4.2 4 L0.6 7.2Z" fill="none" stroke="#b4b4b4" stroke-width="0.9"/></svg>
<svg style="left:32.0px;top:605.3px" width="13" height="8" viewBox="0 0 13 8"><rect x="0.4" y="0.4" width="12.2" height="7.2" rx="0.6" fill="#3a3a3c" stroke="#7a7a80" stroke-width="0.8"/><circle cx="3.2" cy="4" r="1.4" fill="none" stroke="#d08a96" stroke-width="0.9"/><circle cx="6.5" cy="4" r="1.4" fill="none" stroke="#8a8ed0" stroke-width="0.9"/><circle cx="9.8" cy="4" r="1.5" fill="#7ccc7c" stroke="#a8e0a8" stroke-width="0.6"/></svg>
<div class="t" style="left:47.5px;top:604.3px;transform:scaleX(0.893);">EVGENY.01 - Видеоустройства Mobotix</div>
<svg style="left:22.0px;top:619.4px" width="5" height="8" viewBox="0 0 5 8"><path d="M0.6 0.8 L4.2 4 L0.6 7.2Z" fill="none" stroke="#b4b4b4" stroke-width="0.9"/></svg>
<svg style="left:32.0px;top:616.9px" width="13" height="13" viewBox="0 0 13 13"><path d="M0.6 12.4 L2 6.6 L5.8 2.6 L8.6 0.6 L12.6 3.4 L12.8 7.2 L11 8.4Z" fill="#b2d8a4" stroke="#56844a" stroke-width="0.7"/><path d="M2.6 8.2 L9.4 2.4 M3.2 10.4 L11.2 5" stroke="#6f9e62" stroke-width="0.9"/><path d="M4.4 6.6 L8.6 3.2" stroke="#e4f4dc" stroke-width="0.8"/><path d="M0.6 12.4 L11.2 8.2" stroke="#1e3c1a" stroke-width="1.7"/><path d="M10.6 3 L12.9 4.2 L12.9 7.6 L11.2 8.6Z" fill="#2c4a28"/></svg>
<div class="t" style="left:47.5px;top:618.4px;transform:scaleX(0.893);">EVGENY.02 - COM-порт</div>
<svg style="left:21.0px;top:634.9px" width="6" height="6" viewBox="0 0 6 6"><path d="M0.2 5.6 H5.6 V0.2Z" fill="#2e2e2e"/></svg>
<svg style="left:32.0px;top:630.9px" width="13" height="13" viewBox="0 0 13 13"><path d="M0.6 12.4 L2 6.6 L5.8 2.6 L8.6 0.6 L12.6 3.4 L12.8 7.2 L11 8.4Z" fill="#b2d8a4" stroke="#56844a" stroke-width="0.7"/><path d="M2.6 8.2 L9.4 2.4 M3.2 10.4 L11.2 5" stroke="#6f9e62" stroke-width="0.9"/><path d="M4.4 6.6 L8.6 3.2" stroke="#e4f4dc" stroke-width="0.8"/><path d="M0.6 12.4 L11.2 8.2" stroke="#1e3c1a" stroke-width="1.7"/><path d="M10.6 3 L12.9 4.2 L12.9 7.6 L11.2 8.6Z" fill="#2c4a28"/></svg>
<div class="t" style="left:47.5px;top:632.4px;transform:scaleX(0.893);">EVGENY.03 - COM-порт</div>
<svg style="left:36.0px;top:649.0px" width="6" height="6" viewBox="0 0 6 6"><path d="M0.2 5.6 H5.6 V0.2Z" fill="#2e2e2e"/></svg>
<svg style="left:47.0px;top:647.5px" width="13" height="8" viewBox="0 0 13 8"><rect x="0" y="0" width="13" height="1.6" fill="#3f55b8"/><rect x="0" y="6.3" width="13" height="1.7" fill="#4a62c4"/><g fill="#1a1a24"><rect x="0.6" y="2.2" width="3.4" height="3.8"/><rect x="4.8" y="2.2" width="3.4" height="3.8"/><rect x="9" y="2.2" width="3.4" height="3.8"/></g><g fill="#7f8fd8"><rect x="0" y="1.6" width="13" height="0.6"/></g></svg>
<div class="t" style="left:62.5px;top:646.5px;transform:scaleX(0.893);">EVGENY.03.00 - БПИ-RS-И</div>
<svg style="left:52.0px;top:661.5px" width="5" height="8" viewBox="0 0 5 8"><path d="M0.6 0.8 L4.2 4 L0.6 7.2Z" fill="none" stroke="#b4b4b4" stroke-width="0.9"/></svg>
<svg style="left:62.0px;top:659.0px" width="13" height="13" viewBox="0 0 13 13"><path d="M0.5 1.5 H9 L5 7.8 H0.5Z" fill="#3dba2f" stroke="#1d5518" stroke-width="0.9"/><rect x="1.5" y="2.5" width="3.5" height="2.5" fill="#7fd86c"/><path d="M8.3 1.2 L12.4 0.8 V8.2 L5.4 12.5 L5.2 7.6Z" fill="#75727c" stroke="#2b2a30" stroke-width="1"/><path d="M6.8 7.6 L10.8 2.6" stroke="#a9a6b0" stroke-width="0.8"/></svg>
<div class="t" style="left:77.5px;top:660.5px;transform:scaleX(0.893);">EVGENY.03.00.01 - РРОП-И</div>
<svg style="left:22.0px;top:675.5px" width="5" height="8" viewBox="0 0 5 8"><path d="M0.6 0.8 L4.2 4 L0.6 7.2Z" fill="none" stroke="#b4b4b4" stroke-width="0.9"/></svg>
<svg style="left:32.0px;top:673.0px" width="13" height="13" viewBox="0 0 13 13"><path d="M0.6 12.4 L2 6.6 L5.8 2.6 L8.6 0.6 L12.6 3.4 L12.8 7.2 L11 8.4Z" fill="#b2d8a4" stroke="#56844a" stroke-width="0.7"/><path d="M2.6 8.2 L9.4 2.4 M3.2 10.4 L11.2 5" stroke="#6f9e62" stroke-width="0.9"/><path d="M4.4 6.6 L8.6 3.2" stroke="#e4f4dc" stroke-width="0.8"/><path d="M0.6 12.4 L11.2 8.2" stroke="#1e3c1a" stroke-width="1.7"/><path d="M10.6 3 L12.9 4.2 L12.9 7.6 L11.2 8.6Z" fill="#2c4a28"/></svg>
<div class="t" style="left:47.5px;top:674.5px;transform:scaleX(0.893);">EVGENY.04 - COM-порт</div>
<svg style="left:22.0px;top:689.6px" width="5" height="8" viewBox="0 0 5 8"><path d="M0.6 0.8 L4.2 4 L0.6 7.2Z" fill="none" stroke="#b4b4b4" stroke-width="0.9"/></svg>
<svg style="left:32.0px;top:687.1px" width="13" height="13" viewBox="0 0 13 13"><path d="M0.6 12.4 L2 6.6 L5.8 2.6 L8.6 0.6 L12.6 3.4 L12.8 7.2 L11 8.4Z" fill="#b2d8a4" stroke="#56844a" stroke-width="0.7"/><path d="M2.6 8.2 L9.4 2.4 M3.2 10.4 L11.2 5" stroke="#6f9e62" stroke-width="0.9"/><path d="M4.4 6.6 L8.6 3.2" stroke="#e4f4dc" stroke-width="0.8"/><path d="M0.6 12.4 L11.2 8.2" stroke="#1e3c1a" stroke-width="1.7"/><path d="M10.6 3 L12.9 4.2 L12.9 7.6 L11.2 8.6Z" fill="#2c4a28"/></svg>
<div class="t" style="left:47.5px;top:688.6px;transform:scaleX(0.893);">EVGENY.05 - COM-порт</div>
<svg style="left:22.0px;top:703.6px" width="5" height="8" viewBox="0 0 5 8"><path d="M0.6 0.8 L4.2 4 L0.6 7.2Z" fill="none" stroke="#b4b4b4" stroke-width="0.9"/></svg>
<svg style="left:32.0px;top:701.1px" width="13" height="13" viewBox="0 0 13 13"><path d="M0.6 12.4 L2 6.6 L5.8 2.6 L8.6 0.6 L12.6 3.4 L12.8 7.2 L11 8.4Z" fill="#b2d8a4" stroke="#56844a" stroke-width="0.7"/><path d="M2.6 8.2 L9.4 2.4 M3.2 10.4 L11.2 5" stroke="#6f9e62" stroke-width="0.9"/><path d="M4.4 6.6 L8.6 3.2" stroke="#e4f4dc" stroke-width="0.8"/><path d="M0.6 12.4 L11.2 8.2" stroke="#1e3c1a" stroke-width="1.7"/><path d="M10.6 3 L12.9 4.2 L12.9 7.6 L11.2 8.6Z" fill="#2c4a28"/></svg>
<div class="t" style="left:47.5px;top:702.6px;transform:scaleX(0.893);">EVGENY.07 - COM-порт</div>
<svg style="left:22.0px;top:717.7px" width="5" height="8" viewBox="0 0 5 8"><path d="M0.6 0.8 L4.2 4 L0.6 7.2Z" fill="none" stroke="#b4b4b4" stroke-width="0.9"/></svg>
<svg style="left:32.0px;top:715.2px" width="13" height="13" viewBox="0 0 13 13"><path d="M0.6 12.4 L2 6.6 L5.8 2.6 L8.6 0.6 L12.6 3.4 L12.8 7.2 L11 8.4Z" fill="#b2d8a4" stroke="#56844a" stroke-width="0.7"/><path d="M2.6 8.2 L9.4 2.4 M3.2 10.4 L11.2 5" stroke="#6f9e62" stroke-width="0.9"/><path d="M4.4 6.6 L8.6 3.2" stroke="#e4f4dc" stroke-width="0.8"/><path d="M0.6 12.4 L11.2 8.2" stroke="#1e3c1a" stroke-width="1.7"/><path d="M10.6 3 L12.9 4.2 L12.9 7.6 L11.2 8.6Z" fill="#2c4a28"/></svg>
<div class="t" style="left:47.5px;top:716.7px;transform:scaleX(0.893);">EVGENY.09 - COM-порт</div>
<svg style="left:22.0px;top:731.8px" width="5" height="8" viewBox="0 0 5 8"><path d="M0.6 0.8 L4.2 4 L0.6 7.2Z" fill="none" stroke="#b4b4b4" stroke-width="0.9"/></svg>
<svg style="left:32.0px;top:729.2px" width="13" height="13" viewBox="0 0 13 13"><path d="M0.6 12.4 L2 6.6 L5.8 2.6 L8.6 0.6 L12.6 3.4 L12.8 7.2 L11 8.4Z" fill="#b2d8a4" stroke="#56844a" stroke-width="0.7"/><path d="M2.6 8.2 L9.4 2.4 M3.2 10.4 L11.2 5" stroke="#6f9e62" stroke-width="0.9"/><path d="M4.4 6.6 L8.6 3.2" stroke="#e4f4dc" stroke-width="0.8"/><path d="M0.6 12.4 L11.2 8.2" stroke="#1e3c1a" stroke-width="1.7"/><path d="M10.6 3 L12.9 4.2 L12.9 7.6 L11.2 8.6Z" fill="#2c4a28"/></svg>
<div class="t" style="left:47.5px;top:730.8px;transform:scaleX(0.893);">EVGENY.10 - COM-порт</div>
<svg style="left:22.0px;top:745.8px" width="5" height="8" viewBox="0 0 5 8"><path d="M0.6 0.8 L4.2 4 L0.6 7.2Z" fill="none" stroke="#b4b4b4" stroke-width="0.9"/></svg>
<svg style="left:32.0px;top:743.3px" width="13" height="13" viewBox="0 0 13 13"><path d="M0.6 12.4 L2 6.6 L5.8 2.6 L8.6 0.6 L12.6 3.4 L12.8 7.2 L11 8.4Z" fill="#b2d8a4" stroke="#56844a" stroke-width="0.7"/><path d="M2.6 8.2 L9.4 2.4 M3.2 10.4 L11.2 5" stroke="#6f9e62" stroke-width="0.9"/><path d="M4.4 6.6 L8.6 3.2" stroke="#e4f4dc" stroke-width="0.8"/><path d="M0.6 12.4 L11.2 8.2" stroke="#1e3c1a" stroke-width="1.7"/><path d="M10.6 3 L12.9 4.2 L12.9 7.6 L11.2 8.6Z" fill="#2c4a28"/></svg>
<div class="t" style="left:47.5px;top:744.8px;transform:scaleX(0.893);">EVGENY.12 - COM-порт</div>
<svg style="left:741.0px;top:168.0px" width="13" height="13" viewBox="0 0 13 13"><path d="M0.6 12.4 L2 6.6 L5.8 2.6 L8.6 0.6 L12.6 3.4 L12.8 7.2 L11 8.4Z" fill="#b2d8a4" stroke="#56844a" stroke-width="0.7"/><path d="M2.6 8.2 L9.4 2.4 M3.2 10.4 L11.2 5" stroke="#6f9e62" stroke-width="0.9"/><path d="M4.4 6.6 L8.6 3.2" stroke="#e4f4dc" stroke-width="0.8"/><path d="M0.6 12.4 L11.2 8.2" stroke="#1e3c1a" stroke-width="1.7"/><path d="M10.6 3 L12.9 4.2 L12.9 7.6 L11.2 8.6Z" fill="#2c4a28"/></svg>
<div class="t" style="left:757.0px;top:169.5px;transform:scaleX(0.922);">COM-порт</div>
<svg style="left:741.0px;top:182.1px" width="13" height="13" viewBox="0 0 13 13"><rect x="1" y="0.5" width="8" height="6" fill="#bfe3f7" stroke="#5a8ab8" stroke-width="0.8"/><rect x="0" y="8" width="10" height="4" fill="#c8c8c8" stroke="#777" stroke-width="0.6"/><circle cx="10.5" cy="4" r="2.2" fill="#2fc02f"/><circle cx="10.5" cy="10" r="2.2" fill="#e02a2a"/></svg>
<div class="t" style="left:757.0px;top:183.6px;transform:scaleX(0.922);">OPC-сервер</div>
<svg style="left:741.0px;top:198.6px" width="13" height="8" viewBox="0 0 13 8"><rect x="0.4" y="0.4" width="12.2" height="7.2" rx="0.6" fill="#3a3a3c" stroke="#7a7a80" stroke-width="0.8"/><circle cx="3.2" cy="4" r="1.4" fill="none" stroke="#d08a96" stroke-width="0.9"/><circle cx="6.5" cy="4" r="1.4" fill="none" stroke="#8a8ed0" stroke-width="0.9"/><circle cx="9.8" cy="4" r="1.5" fill="#7ccc7c" stroke="#a8e0a8" stroke-width="0.6"/></svg>
<div class="t" style="left:757.0px;top:197.6px;transform:scaleX(0.922);">Видеоустройства Absolutron</div>
<svg style="left:741.0px;top:212.7px" width="13" height="8" viewBox="0 0 13 8"><rect x="0.4" y="0.4" width="12.2" height="7.2" rx="0.6" fill="#3a3a3c" stroke="#7a7a80" stroke-width="0.8"/><circle cx="3.2" cy="4" r="1.4" fill="none" stroke="#d08a96" stroke-width="0.9"/><circle cx="6.5" cy="4" r="1.4" fill="none" stroke="#8a8ed0" stroke-width="0.9"/><circle cx="9.8" cy="4" r="1.5" fill="#7ccc7c" stroke="#a8e0a8" stroke-width="0.6"/></svg>
<div class="t" style="left:757.0px;top:211.7px;transform:scaleX(0.922);">Видеоустройства Apix</div>
<svg style="left:741.0px;top:226.7px" width="13" height="8" viewBox="0 0 13 8"><rect x="0.4" y="0.4" width="12.2" height="7.2" rx="0.6" fill="#3a3a3c" stroke="#7a7a80" stroke-width="0.8"/><circle cx="3.2" cy="4" r="1.4" fill="none" stroke="#d08a96" stroke-width="0.9"/><circle cx="6.5" cy="4" r="1.4" fill="none" stroke="#8a8ed0" stroke-width="0.9"/><circle cx="9.8" cy="4" r="1.5" fill="#7ccc7c" stroke="#a8e0a8" stroke-width="0.6"/></svg>
<div class="t" style="left:757.0px;top:225.7px;transform:scaleX(0.922);">Видеоустройства Bosch</div>
<svg style="left:741.0px;top:240.8px" width="13" height="8" viewBox="0 0 13 8"><rect x="0.4" y="0.4" width="12.2" height="7.2" rx="0.6" fill="#3a3a3c" stroke="#7a7a80" stroke-width="0.8"/><circle cx="3.2" cy="4" r="1.4" fill="none" stroke="#d08a96" stroke-width="0.9"/><circle cx="6.5" cy="4" r="1.4" fill="none" stroke="#8a8ed0" stroke-width="0.9"/><circle cx="9.8" cy="4" r="1.5" fill="#7ccc7c" stroke="#a8e0a8" stroke-width="0.6"/></svg>
<div class="t" style="left:757.0px;top:239.8px;transform:scaleX(0.922);">Видеоустройства DynaColor</div>
<svg style="left:741.0px;top:252.3px" width="13" height="13" viewBox="0 0 13 13"><circle cx="5" cy="4.5" r="3.5" fill="#f2c79a" stroke="#a8602a" stroke-width="0.8"/><path d="M1.5 4 Q2 0.5 5.5 1 Q8 1.5 8 3.5 Q5 2 3 5Z" fill="#a8602a"/><path d="M0.5 12.5 Q1 8.5 5 8.5 Q8 8.5 8.5 12.5Z" fill="#6aa8c0"/><path d="M6 10 H12.5 M6 10 L8.5 7.5 M6 10 L8.5 12.5" stroke="#2a4fd0" stroke-width="1.6" fill="none"/></svg>
<div class="t" style="left:757.0px;top:253.8px;transform:scaleX(0.922);">Импорт сотрудников (ODBC драйвер)</div>
<svg style="left:741.0px;top:268.9px" width="13" height="8" viewBox="0 0 13 8"><rect x="0" y="0" width="13" height="1.6" fill="#3f55b8"/><rect x="0" y="6.3" width="13" height="1.7" fill="#4a62c4"/><g fill="#1a1a24"><rect x="0.6" y="2.2" width="3.4" height="3.8"/><rect x="4.8" y="2.2" width="3.4" height="3.8"/><rect x="9" y="2.2" width="3.4" height="3.8"/></g><g fill="#7f8fd8"><rect x="0" y="1.6" width="13" height="0.6"/></g></svg>
<div class="t" style="left:757.0px;top:267.9px;transform:scaleX(0.922);">Маршрутизатор Broadway</div>
<svg style="left:741.0px;top:282.9px" width="13" height="8" viewBox="0 0 13 8"><rect x="0.4" y="0.4" width="12.2" height="7.2" rx="0.6" fill="#3a3a3c" stroke="#7a7a80" stroke-width="0.8"/><circle cx="3.2" cy="4" r="1.4" fill="none" stroke="#d08a96" stroke-width="0.9"/><circle cx="6.5" cy="4" r="1.4" fill="none" stroke="#8a8ed0" stroke-width="0.9"/><circle cx="9.8" cy="4" r="1.5" fill="#7ccc7c" stroke="#a8e0a8" stroke-width="0.6"/></svg>
<div class="t" style="left:757.0px;top:281.9px;transform:scaleX(0.922);">Платы захвата Intellect</div>
<svg style="left:741.0px;top:297.4px" width="13" height="7" viewBox="0 0 13 7"><path d="M1.5 0.5 H12.5 L11.5 6.5 H0.5Z" fill="#5a5a5a" stroke="#2e2e2e" stroke-width="0.8"/><path d="M2 3 H11.5" stroke="#a8a8a8" stroke-width="1"/><rect x="2" y="4.2" width="7" height="1" fill="#4f8a6a"/></svg>
<div class="t" style="left:757.0px;top:295.9px;transform:scaleX(0.922);">Сервер SecurOS</div>
<svg style="left:741.0px;top:311.0px" width="13" height="8" viewBox="0 0 13 8"><rect x="0" y="0" width="13" height="1.6" fill="#3f55b8"/><rect x="0" y="6.3" width="13" height="1.7" fill="#4a62c4"/><g fill="#1a1a24"><rect x="0.6" y="2.2" width="3.4" height="3.8"/><rect x="4.8" y="2.2" width="3.4" height="3.8"/><rect x="9" y="2.2" width="3.4" height="3.8"/></g><g fill="#7f8fd8"><rect x="0" y="1.6" width="13" height="0.6"/></g></svg>
<div class="t" style="left:757.0px;top:310.0px;transform:scaleX(0.922);">Устройства ввода посетителей</div>
<div class="sep" style="left:548px"></div>
<div class="sep" style="left:709px"></div>
<div class="sep" style="left:775px"></div>
<div class="sep" style="left:841px"></div>
<div class="t" style="left:553.0px;top:763.2px;transform:scaleX(0.893);">Оператор:</div>
<div class="t" style="left:606.0px;top:763.2px;transform:scaleX(0.893);">Администратор А.</div>
<div class="t" style="left:713.0px;top:763.2px;transform:scaleX(0.950);">29.10.2012</div>
<div class="t" style="left:781.0px;top:763.2px;transform:scaleX(0.893);">15:58:38</div>
<div class="t" style="left:846.0px;top:763.2px;transform:scaleX(0.912);">Тип дня:</div>
<div class="t" style="left:888.0px;top:763.2px;transform:scaleX(0.912);">Рабочий</div>
</body></html>
